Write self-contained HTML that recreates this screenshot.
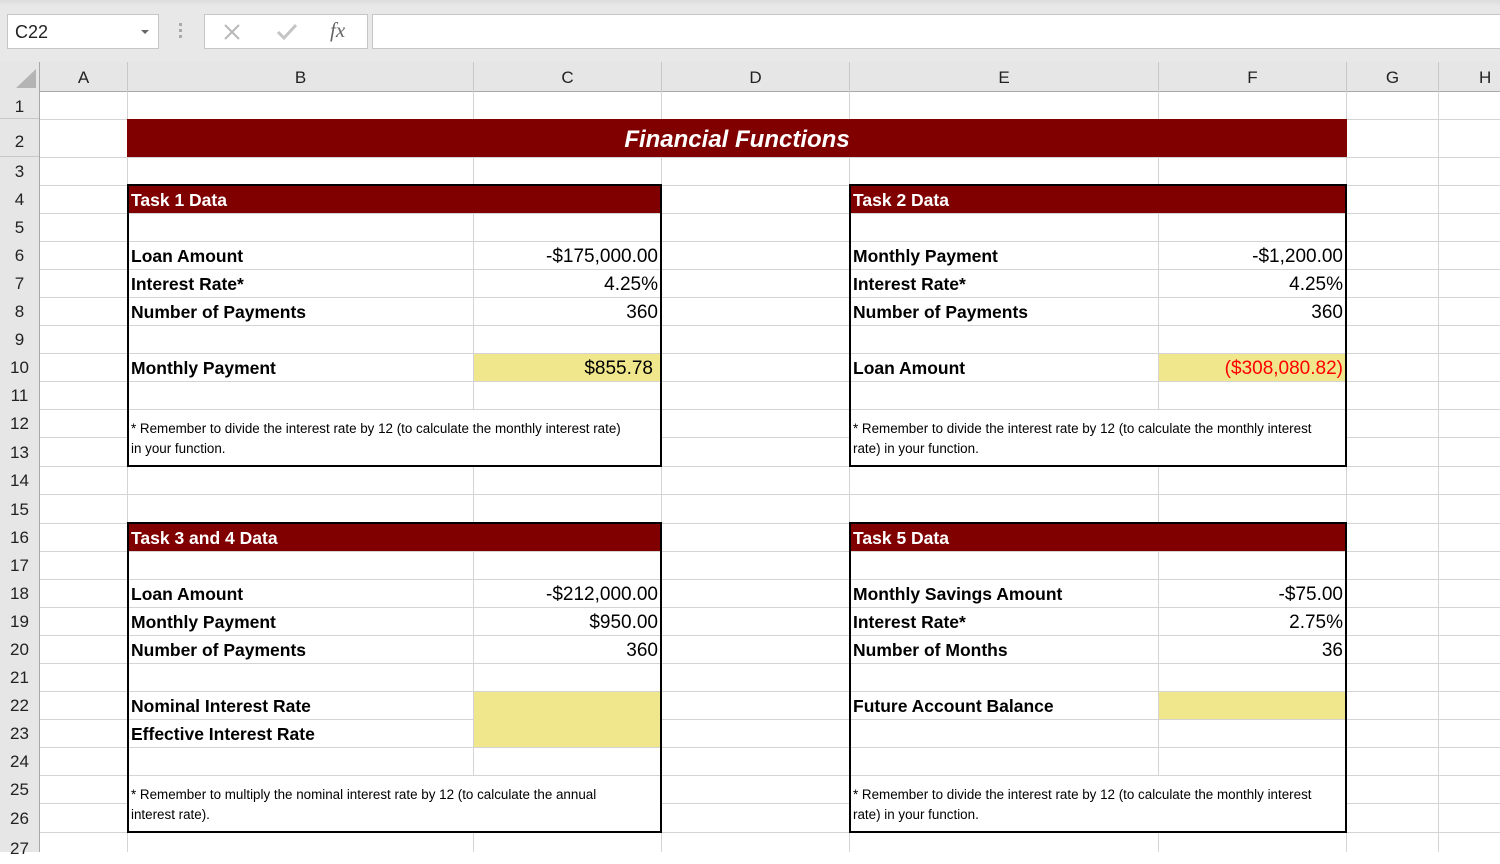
<!DOCTYPE html>
<html><head><meta charset="utf-8"><style>
*{margin:0;padding:0;box-sizing:border-box}
body{width:1500px;height:852px;overflow:hidden;background:#fff;position:relative;font-family:"Liberation Sans",sans-serif;color:#000}
.a{position:absolute}
.vl{position:absolute;width:1px;background:#d4d4d4;top:92px;height:760px}
.hl{position:absolute;height:1px;background:#d4d4d4;left:40px;width:1460px}
.rh{position:absolute;left:0;width:39px;height:28px;font-size:17px;line-height:30px;text-align:center;color:#222}
.ch{position:absolute;top:62px;height:30px;line-height:31px;font-size:17px;text-align:center;color:#222}
.box{position:absolute;border:2px solid #000;background:transparent}
.hd{position:absolute;background:#800000;color:#fff;font-weight:bold;font-size:17.5px;line-height:30px;padding-left:3px}
.lb{position:absolute;font-weight:bold;font-size:17.5px;line-height:28px;height:28px;white-space:nowrap}
.vv{position:absolute;font-size:19px;line-height:30px;height:28px;text-align:right;white-space:nowrap}
.nt{position:absolute;background:#fff;font-size:13.4px;line-height:20px;padding:9px 0 0 3px;white-space:nowrap}
.y{position:absolute;background:#f0e68c}
</style></head><body>
<div class="a" style="left:0;top:0;width:1500px;height:62px;background:linear-gradient(#dcdcdc,#e8e8e8 6px,#e8e8e8)"></div>
<div class="a" style="left:7px;top:14px;width:152px;height:35px;background:#fff;border:1px solid #c6c6c6;font-size:18px;line-height:35px;padding-left:7px;color:#222">C22</div>
<div class="a" style="left:141px;top:30px;width:0;height:0;border-left:4px solid transparent;border-right:4px solid transparent;border-top:4px solid #666"></div>
<div class="a" style="left:179px;top:23px;width:3px;height:3px;background:#aaa;box-shadow:0 6px #aaa,0 12px #aaa"></div>
<div class="a" style="left:204px;top:14px;width:164px;height:35px;background:#fff;border:1px solid #c6c6c6"></div>
<svg class="a" style="left:222px;top:22px" width="20" height="20"><path d="M3 3L17 17M17 3L3 17" stroke="#b8b8b8" stroke-width="2"/></svg>
<svg class="a" style="left:276px;top:22px" width="22" height="20"><path d="M2 10L8 16L20 3" stroke="#c4c4c4" stroke-width="3" fill="none"/></svg>
<div class="a" style="left:330px;top:18px;font-family:'Liberation Serif',serif;font-style:italic;font-size:21px;color:#666">fx</div>
<div class="a" style="left:372px;top:14px;width:1140px;height:35px;background:#fff;border:1px solid #c6c6c6"></div>
<div class="a" style="left:0;top:62px;width:1500px;height:30px;background:#e6e6e6;border-bottom:1px solid #a8a8a8"></div>
<div class="a" style="left:0;top:62px;width:40px;height:790px;background:#e6e6e6;border-right:1px solid #a8a8a8"></div>
<svg class="a" style="left:16px;top:69px" width="22" height="20"><path d="M20 0L20 19L0 19Z" fill="#b4b4b4"/></svg>
<div class="ch" style="left:40px;width:87px">A</div>
<div class="ch" style="left:127px;width:346px;border-left:1px solid #c8c8c8">B</div>
<div class="ch" style="left:473px;width:188px;border-left:1px solid #c8c8c8">C</div>
<div class="ch" style="left:661px;width:188px;border-left:1px solid #c8c8c8">D</div>
<div class="ch" style="left:849px;width:309px;border-left:1px solid #c8c8c8">E</div>
<div class="ch" style="left:1158px;width:188px;border-left:1px solid #c8c8c8">F</div>
<div class="ch" style="left:1346px;width:92px;border-left:1px solid #c8c8c8">G</div>
<div class="ch" style="left:1438px;width:92px;border-left:1px solid #c8c8c8;text-align:left;padding-left:40px">H</div>
<div class="vl" style="left:127px"></div><div class="vl" style="left:473px"></div><div class="vl" style="left:661px"></div><div class="vl" style="left:849px"></div><div class="vl" style="left:1158px"></div><div class="vl" style="left:1346px"></div><div class="vl" style="left:1438px"></div>
<div class="hl" style="top:119px"></div><div class="hl" style="top:157px"></div><div class="hl" style="top:185px"></div><div class="hl" style="top:213px"></div><div class="hl" style="top:241px"></div><div class="hl" style="top:269px"></div><div class="hl" style="top:297px"></div><div class="hl" style="top:325px"></div><div class="hl" style="top:353px"></div><div class="hl" style="top:381px"></div><div class="hl" style="top:409px"></div><div class="hl" style="top:437px"></div><div class="hl" style="top:466px"></div><div class="hl" style="top:494px"></div><div class="hl" style="top:523px"></div><div class="hl" style="top:551px"></div><div class="hl" style="top:579px"></div><div class="hl" style="top:607px"></div><div class="hl" style="top:635px"></div><div class="hl" style="top:663px"></div><div class="hl" style="top:691px"></div><div class="hl" style="top:719px"></div><div class="hl" style="top:747px"></div><div class="hl" style="top:775px"></div><div class="hl" style="top:803px"></div><div class="hl" style="top:832px"></div>
<div class="rh" style="top:92px;height:27px;border-bottom:1px solid #c8c8c8">1</div>
<div class="rh" style="top:119px;height:38px;line-height:46px;border-bottom:1px solid #c8c8c8">2</div>
<div class="rh" style="top:157px">3</div><div class="rh" style="top:185px">4</div><div class="rh" style="top:213px">5</div><div class="rh" style="top:241px">6</div><div class="rh" style="top:269px">7</div><div class="rh" style="top:297px">8</div><div class="rh" style="top:325px">9</div><div class="rh" style="top:353px">10</div><div class="rh" style="top:381px">11</div><div class="rh" style="top:409px">12</div><div class="rh" style="top:438px">13</div><div class="rh" style="top:466px">14</div><div class="rh" style="top:495px">15</div><div class="rh" style="top:523px">16</div><div class="rh" style="top:551px">17</div><div class="rh" style="top:579px">18</div><div class="rh" style="top:607px">19</div><div class="rh" style="top:635px">20</div><div class="rh" style="top:663px">21</div><div class="rh" style="top:691px">22</div><div class="rh" style="top:719px">23</div><div class="rh" style="top:747px">24</div><div class="rh" style="top:775px">25</div><div class="rh" style="top:804px">26</div><div class="rh" style="top:834px">27</div>
<div class="a" style="left:127px;top:119px;width:1220px;height:38px;background:#800000;color:#fff;font-weight:bold;font-style:italic;font-size:24px;line-height:41px;text-align:center">Financial Functions</div>
<div class="hd" style="left:128px;top:185px;width:533px;height:28px">Task 1 Data</div>
<div class="lb" style="left:131px;top:242px">Loan Amount</div><div class="vv" style="left:473px;width:185px;top:242px">-$175,000.00</div>
<div class="lb" style="left:131px;top:270px">Interest Rate*</div><div class="vv" style="left:473px;width:185px;top:270px">4.25%</div>
<div class="lb" style="left:131px;top:298px">Number of Payments</div><div class="vv" style="left:473px;width:185px;top:298px">360</div>
<div class="y" style="left:474px;top:354px;width:186px;height:27px"></div>
<div class="lb" style="left:131px;top:354px">Monthly Payment</div><div class="vv" style="left:473px;width:180px;top:354px">$855.78</div>
<div class="nt" style="left:128px;top:410px;width:532px;height:55px">* Remember to divide the interest rate by 12 (to calculate the monthly interest rate)<br>in your function.</div>
<div class="box" style="left:127px;top:184px;width:535px;height:283px"></div>
<div class="hd" style="left:850px;top:185px;width:496px;height:28px">Task 2 Data</div>
<div class="lb" style="left:853px;top:242px">Monthly Payment</div><div class="vv" style="left:1158px;width:185px;top:242px">-$1,200.00</div>
<div class="lb" style="left:853px;top:270px">Interest Rate*</div><div class="vv" style="left:1158px;width:185px;top:270px">4.25%</div>
<div class="lb" style="left:853px;top:298px">Number of Payments</div><div class="vv" style="left:1158px;width:185px;top:298px">360</div>
<div class="y" style="left:1159px;top:354px;width:186px;height:27px"></div>
<div class="lb" style="left:853px;top:354px">Loan Amount</div><div class="vv" style="left:1158px;width:185px;top:354px;color:#f00">($308,080.82)</div>
<div class="nt" style="left:850px;top:410px;width:495px;height:55px">* Remember to divide the interest rate by 12 (to calculate the monthly interest<br>rate) in your function.</div>
<div class="box" style="left:849px;top:184px;width:498px;height:283px"></div>
<div class="hd" style="left:128px;top:523px;width:533px;height:28px">Task 3 and 4 Data</div>
<div class="lb" style="left:131px;top:580px">Loan Amount</div><div class="vv" style="left:473px;width:185px;top:580px">-$212,000.00</div>
<div class="lb" style="left:131px;top:608px">Monthly Payment</div><div class="vv" style="left:473px;width:185px;top:608px">$950.00</div>
<div class="lb" style="left:131px;top:636px">Number of Payments</div><div class="vv" style="left:473px;width:185px;top:636px">360</div>
<div class="y" style="left:474px;top:692px;width:186px;height:55px"></div>
<div class="lb" style="left:131px;top:692px">Nominal Interest Rate</div>
<div class="lb" style="left:131px;top:720px">Effective Interest Rate</div>
<div class="nt" style="left:128px;top:776px;width:532px;height:55px">* Remember to multiply the nominal interest rate by 12 (to calculate the annual<br>interest rate).</div>
<div class="box" style="left:127px;top:522px;width:535px;height:311px"></div>
<div class="hd" style="left:850px;top:523px;width:496px;height:28px">Task 5 Data</div>
<div class="lb" style="left:853px;top:580px">Monthly Savings Amount</div><div class="vv" style="left:1158px;width:185px;top:580px">-$75.00</div>
<div class="lb" style="left:853px;top:608px">Interest Rate*</div><div class="vv" style="left:1158px;width:185px;top:608px">2.75%</div>
<div class="lb" style="left:853px;top:636px">Number of Months</div><div class="vv" style="left:1158px;width:185px;top:636px">36</div>
<div class="y" style="left:1159px;top:692px;width:186px;height:27px"></div>
<div class="lb" style="left:853px;top:692px">Future Account Balance</div>
<div class="nt" style="left:850px;top:776px;width:495px;height:55px">* Remember to divide the interest rate by 12 (to calculate the monthly interest<br>rate) in your function.</div>
<div class="box" style="left:849px;top:522px;width:498px;height:311px"></div>
</body></html>
